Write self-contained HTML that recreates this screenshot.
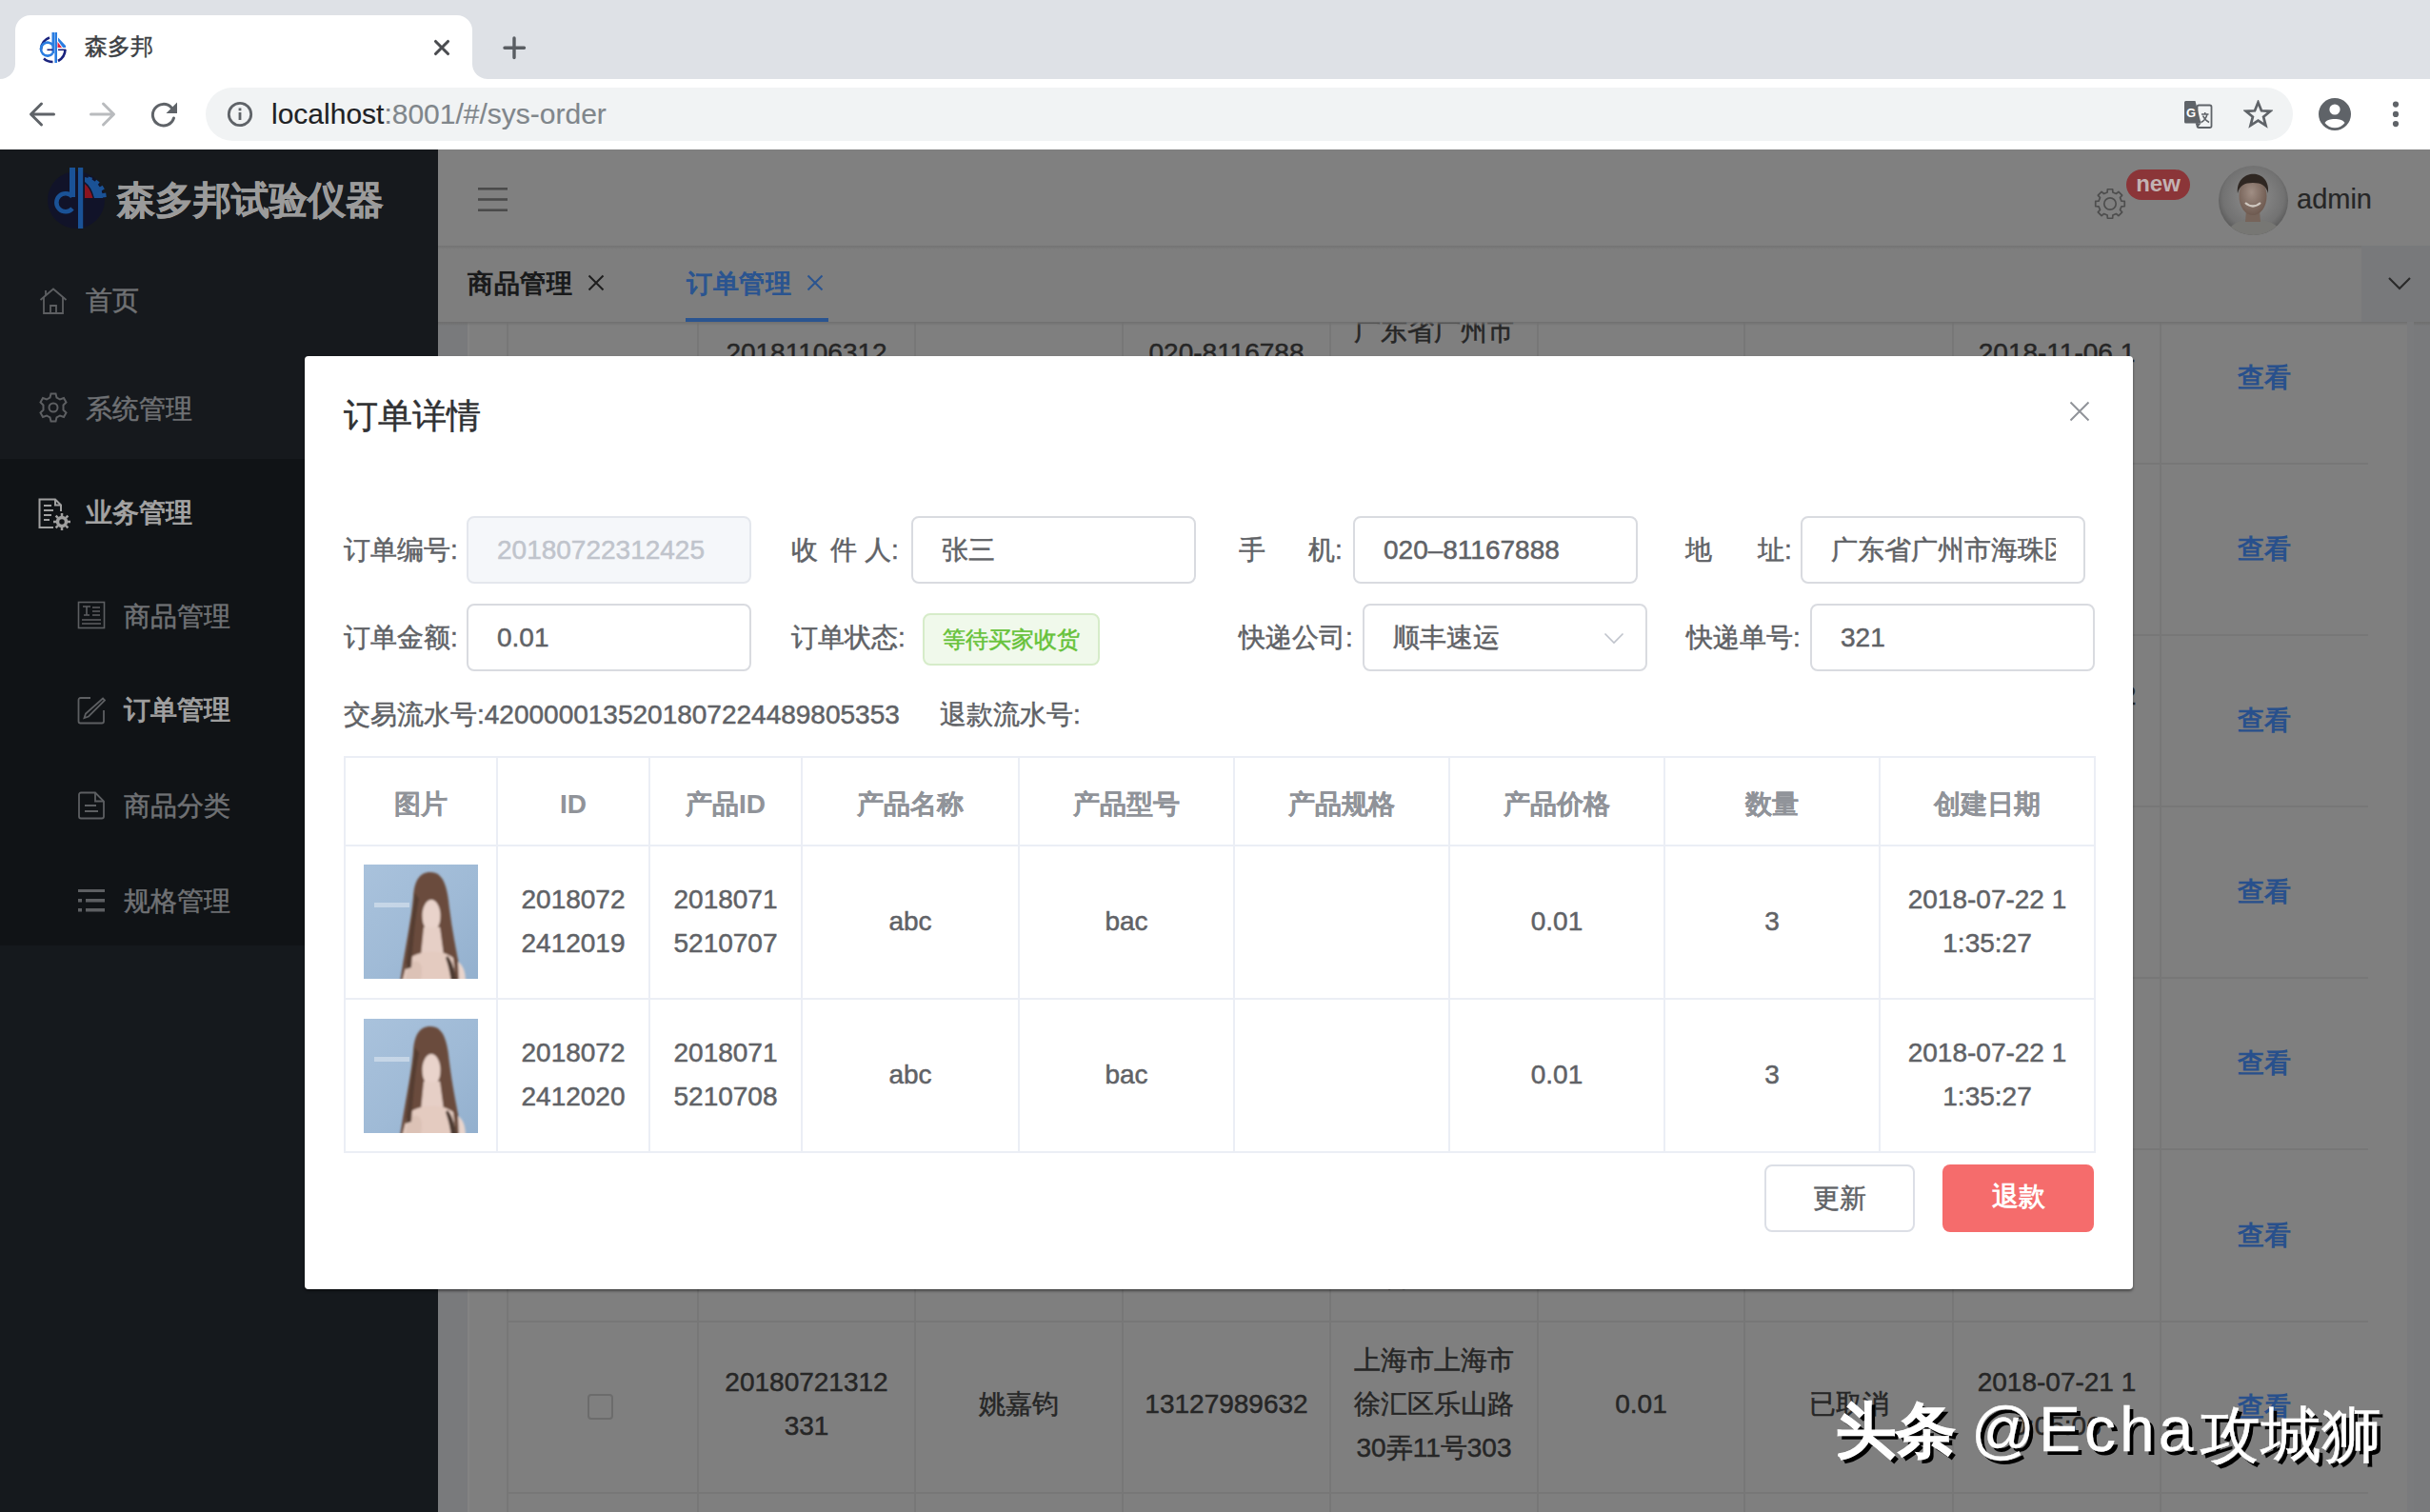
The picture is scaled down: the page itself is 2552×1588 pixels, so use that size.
<!DOCTYPE html>
<html><head><meta charset="utf-8">
<style>
*{box-sizing:border-box;margin:0;padding:0}
html,body{width:2552px;height:1588px;overflow:hidden;background:#808080;font-family:"Liberation Sans",sans-serif}
body{-webkit-text-stroke:0.5px currentColor}
.a{position:absolute}
.c{position:absolute;text-align:center;white-space:nowrap}
/* chrome */
#topstrip{left:0;top:0;width:2552px;height:84px;background:#dee1e6}
#tab{left:16px;top:16px;width:480px;height:68px;background:#fff;border-radius:16px 16px 0 0}
#toolbar{left:0;top:83px;width:2552px;height:75px;background:#fff}
#omni{left:216px;top:92px;width:2192px;height:56px;background:#f1f3f4;border-radius:28px}
/* app */
#side1{left:0;top:157px;width:460px;height:325px;background:#16191d}
#side2{left:0;top:482px;width:460px;height:511px;background:#101316}
#side3{left:0;top:993px;width:460px;height:595px;background:#15191d}
#header{left:460px;top:157px;width:2092px;height:101px;background:#808080}
#tabsbar{left:460px;top:258px;width:2092px;height:80px;background:#7e7e7e}
#content{left:460px;top:338px;width:2092px;height:1250px;background:#797a7c}
.menu{color:#6f7174;font-size:28px;line-height:28px}
/* modal */
#modal{left:320px;top:374px;width:1920px;height:980px;background:#fff;border-radius:4px;box-shadow:0 2px 3px rgba(0,0,0,.45)}
.lbl{position:absolute;color:#606266;font-size:28px;line-height:28px;white-space:nowrap}
.inp{position:absolute;border:2px solid #d9dbe0;border-radius:8px;background:#fff;height:71px;width:299px;color:#606266;font-size:28px;line-height:67px;padding-left:30px;white-space:nowrap;overflow:hidden}
table.dt{position:absolute;border-collapse:collapse;left:41px;top:420px}
.dt td,.dt th{border:2px solid #ebeef5;text-align:center;color:#606266;font-size:28px;line-height:46px}
.dt th{color:#909399;font-weight:bold;height:93px;padding-top:6px;-webkit-text-stroke:0.1px #909399}
.dt td{height:161px;padding-bottom:2px}
.btn{position:absolute;border-radius:8px;font-size:28px;text-align:center;line-height:67px}
</style></head><body>
<div id="topstrip" class="a"></div>
<div id="tab" class="a"></div>
<div class="a" style="left:0;top:67px;width:16px;height:17px;background:#fff"></div>
<div class="a" style="left:-16px;top:51px;width:32px;height:32px;background:#dee1e6;border-radius:16px"></div>
<div class="a" style="left:496px;top:67px;width:16px;height:17px;background:#fff"></div>
<div class="a" style="left:496px;top:51px;width:32px;height:32px;background:#dee1e6;border-radius:16px"></div>
<div class="a" style="left:89px;top:33px;font-size:24px;color:#3c4043">森多邦</div>
<div id="toolbar" class="a"></div>
<div id="omni" class="a"></div>
<div class="a" style="left:285px;top:103px;font-size:30px;color:#202124;white-space:nowrap;-webkit-text-stroke:0.15px">localhost<span style="color:#80868b">:8001/#/sys-order</span></div>
<!-- favicon -->
<svg class="a" style="left:40px;top:30px" width="40" height="40" viewBox="0 0 40 40">
  <path d="M12 9.5 A14 14 0 0 0 3 22" stroke="#1a237e" stroke-width="2.6" fill="none"/>
  <path d="M6 31.5 A14 14 0 0 0 15.5 35" stroke="#1a237e" stroke-width="2.6" fill="none"/>
  <path d="M21 34 A14 14 0 0 0 28.5 22" stroke="#1a237e" stroke-width="2.6" fill="none"/>
  <rect x="14.5" y="4" width="2.6" height="22" fill="#2a7de1"/>
  <rect x="17.4" y="4" width="2.6" height="32" fill="#2a7de1"/>
  <path d="M16 18 A7 7 0 1 0 15.5 26" stroke="#2a7de1" stroke-width="2.6" fill="none"/>
  <rect x="9.5" y="21.5" width="6" height="1.6" fill="#1a237e"/>
  <rect x="21" y="21.5" width="8" height="1.6" fill="#1a237e"/>
  <path d="M20.5 14 L20.5 20 L25 20 Z" fill="#e8203a"/>
  <path d="M21 9.5 L29 18 L29 20 L26 20 L21 13 Z" fill="#2a7de1"/>
</svg>
<!-- tab close -->
<svg class="a" style="left:454px;top:40px" width="20" height="20" viewBox="0 0 20 20"><path d="M3.5 3.5L16.5 16.5M16.5 3.5L3.5 16.5" stroke="#4a4c50" stroke-width="3.1" stroke-linecap="round"/></svg>
<!-- new tab -->
<svg class="a" style="left:527px;top:37px" width="27" height="27" viewBox="0 0 27 27"><path d="M13 3V23.5M3 13.3H23.5" stroke="#5a5e63" stroke-width="3.4" stroke-linecap="round"/></svg>
<!-- back / fwd / reload -->
<svg class="a" style="left:28px;top:104px" width="32" height="32" viewBox="0 0 32 32"><path d="M28.5 16H6M15.5 5L4.5 16L15.5 27" stroke="#5f6368" stroke-width="3" fill="none" stroke-linecap="round" stroke-linejoin="round"/></svg>
<svg class="a" style="left:92px;top:104px" width="32" height="32" viewBox="0 0 32 32"><path d="M3.5 16H26M16.5 5L27.5 16L16.5 27" stroke="#b9bbbe" stroke-width="3" fill="none" stroke-linecap="round" stroke-linejoin="round"/></svg>
<svg class="a" style="left:156px;top:104px" width="34" height="34" viewBox="0 0 34 34"><path d="M26.5 20 A11.3 11.3 0 1 1 24 9" stroke="#5f6368" stroke-width="3" fill="none" stroke-linecap="round"/><path d="M30 3.5V15H18.5Z" fill="#5f6368"/></svg>
<!-- info -->
<svg class="a" style="left:237px;top:105px" width="30" height="30" viewBox="0 0 30 30"><circle cx="15" cy="15" r="11.7" stroke="#5f6368" stroke-width="2.8" fill="none"/><rect x="13.6" y="13" width="2.8" height="8" fill="#5f6368"/><rect x="13.6" y="8.5" width="2.8" height="2.8" fill="#5f6368"/></svg>
<!-- translate -->
<svg class="a" style="left:2290px;top:103px" width="36" height="34" viewBox="0 0 36 34"><rect x="17.5" y="7.5" width="15" height="23.5" rx="1.8" fill="none" stroke="#5f6368" stroke-width="1.8"/><path d="M5.5 3H15.5L21.5 26.5H5.5A1.5 1.5 0 0 1 4 25V4.5A1.5 1.5 0 0 1 5.5 3Z" fill="#5f6368"/><path d="M15.5 26.5L18 31L21.5 26.5Z" fill="#5f6368"/><text x="6" y="19.5" font-family="Liberation Sans" font-weight="bold" font-size="13" fill="#fff" style="-webkit-text-stroke:0">G</text><path d="M22 17H29.5M25.7 15V17M28 17C27 21 24.5 24 21.5 25.5M23.5 18.5C25 22 27 24 30 25.5" stroke="#5f6368" stroke-width="1.5" fill="none"/></svg>
<!-- star -->
<svg class="a" style="left:2356px;top:105px" width="31" height="30" viewBox="0 0 31 30"><path d="M15.5 2.5L19 11.3L28.3 11.8L21.1 17.7L23.5 26.8L15.5 21.7L7.5 26.8L9.9 17.7L2.7 11.8L12 11.3Z" stroke="#5f6368" stroke-width="2.7" fill="none" stroke-linejoin="miter"/></svg>
<!-- account -->
<svg class="a" style="left:2434px;top:102px" width="36" height="36" viewBox="0 0 36 36"><circle cx="18" cy="18" r="17" fill="#5f6368"/><circle cx="18" cy="13" r="5.6" fill="#fff"/><path d="M7.5 27 C10 21.5 26 21.5 28.5 27 A13 13 0 0 1 7.5 27Z" fill="#fff"/></svg>
<!-- menu dots -->
<svg class="a" style="left:2510px;top:104px" width="12" height="32" viewBox="0 0 12 32"><circle cx="6" cy="5.6" r="3.1" fill="#5f6368"/><circle cx="6" cy="15.9" r="3.1" fill="#5f6368"/><circle cx="6" cy="26.1" r="3.1" fill="#5f6368"/></svg>

<div id="side1" class="a"></div>
<div id="side2" class="a"></div>
<div id="side3" class="a"></div>
<div class="a" style="left:123px;top:183px;font-size:40px;font-weight:bold;color:#9b9b9b;white-space:nowrap">森多邦试验仪器</div>
<!-- sidebar logo -->
<svg class="a" style="left:45px;top:170px" width="70" height="75" viewBox="0 0 70 75">
  <circle cx="35" cy="40" r="30" fill="#10122e" opacity="0.75"/>
  <rect x="37" y="6" width="5.2" height="64" fill="#1a5296"/>
  <rect x="28" y="6" width="6" height="31" fill="#1a5296"/>
  <path d="M31 36.5 A9.5 9.5 0 1 0 31 49" stroke="#1a5296" stroke-width="4.6" fill="none"/>
  <path d="M44 23 Q50 28 52.5 38 L44 38 Z" fill="#8a1420"/>
  <path d="M44 16 A22 22 0 0 1 63 38 L54 38 Q51 26 44 21 Z" fill="#1a5296"/>
  <rect x="47.1" y="16.0" width="4.4" height="4.4" transform="rotate(-75 49.3 18.2)" fill="#1a5296"/><rect x="54.4" y="19.6" width="4.4" height="4.4" transform="rotate(-52 56.6 21.8)" fill="#1a5296"/><rect x="59.6" y="25.6" width="4.4" height="4.4" transform="rotate(-30 61.8 27.8)" fill="#1a5296"/><rect x="62.1" y="32.9" width="4.4" height="4.4" transform="rotate(-8 64.3 35.1)" fill="#1a5296"/>
</svg>
<!-- sidebar icons -->
<svg class="a" style="left:40px;top:300px" width="32" height="32" viewBox="0 0 32 32" fill="none" stroke="#5d5f62" stroke-width="1.8"><path d="M2.5 15L16 3.5L29.5 15"/><path d="M6 12V29H26V12"/><path d="M13 29V21H19V29"/><path d="M8 5V10"/></svg>
<svg class="a" style="left:39px;top:411px" width="34" height="34" viewBox="0 0 34 34" fill="none" stroke="#5d5f62" stroke-width="2"><path d="M14.5 2.5H19.5L20.5 6.5L24 8.5L28 7L30.5 11.5L27.5 14.5V19.5L30.5 22.5L28 27L24 25.5L20.5 27.5L19.5 31.5H14.5L13.5 27.5L10 25.5L6 27L3.5 22.5L6.5 19.5V14.5L3.5 11.5L6 7L10 8.5L13.5 6.5Z"/><circle cx="17" cy="17" r="4.5"/></svg>
<svg class="a" style="left:39px;top:522px" width="36" height="36" viewBox="0 0 36 36" fill="none" stroke="#a0a0a0" stroke-width="2"><path d="M17 32H2.5V2.5H19L25 8.5V15"/><path d="M19 2.5V8.5H25"/><path d="M7 9H15M7 14H17M7 19H15M7 24H13"/><circle cx="26" cy="26" r="4.5" stroke-width="3.5"/><path d="M26 17V20M26 32V35M17 26H20M32 26H35M19.6 19.6L21.8 21.8M30.2 30.2L32.4 32.4M19.6 32.4L21.8 30.2M30.2 21.8L32.4 19.6" stroke-width="2.5"/></svg>
<svg class="a" style="left:81px;top:631px" width="30" height="30" viewBox="0 0 30 30" fill="none" stroke="#5d5f62" stroke-width="1.6"><rect x="1.5" y="1.5" width="27" height="27"/><path d="M6 6H14M10 6V15M7 15H13M16 7H24M16 11H24M16 15H24M5 20H25M5 24H25"/></svg>
<svg class="a" style="left:81px;top:731px" width="30" height="30" viewBox="0 0 30 30" fill="none" stroke="#5d5f62" stroke-width="1.8"><path d="M14 2H3.5A2 2 0 0 0 1.5 4V26.5A2 2 0 0 0 3.5 28.5H26A2 2 0 0 0 28 26.5V15"/><path d="M27 2.5L29 4.5L12 21.5L7.5 23L9 18.5Z"/></svg>
<svg class="a" style="left:81px;top:831px" width="30" height="30" viewBox="0 0 30 30" fill="none" stroke="#5d5f62" stroke-width="1.8"><path d="M19 1.5H4A2 2 0 0 0 2 3.5V26.5A2 2 0 0 0 4 28.5H26A2 2 0 0 0 28 26.5V10.5Z"/><path d="M19 1.5V10.5H28"/><path d="M8 15H20M8 21H22"/></svg>
<svg class="a" style="left:81px;top:933px" width="30" height="26" viewBox="0 0 30 26" fill="#5d5f62"><rect x="1" y="1" width="28" height="3"/><rect x="1" y="11" width="4" height="3.5"/><rect x="9" y="11" width="20" height="3.5"/><rect x="1" y="21" width="4" height="3.5"/><rect x="9" y="21" width="20" height="3.5"/></svg>
<div class="a menu" style="left:90px;top:302px">首页</div>
<div class="a menu" style="left:90px;top:416px">系统管理</div>
<div class="a menu" style="left:90px;top:525px;color:#a3a3a3;-webkit-text-stroke:1px #a3a3a3">业务管理</div>
<div class="a menu" style="left:130px;top:634px">商品管理</div>
<div class="a menu" style="left:130px;top:732px;color:#a0a0a0;-webkit-text-stroke:1px #a0a0a0">订单管理</div>
<div class="a menu" style="left:130px;top:833px">商品分类</div>
<div class="a menu" style="left:130px;top:933px">规格管理</div>

<div id="header" class="a"></div>
<div id="tabsbar" class="a"></div>
<div id="content" class="a"></div>
<div class="a" style="left:460px;top:258px;width:2092px;height:4px;background:linear-gradient(#737373,#7e7e7e)"></div>
<div class="a" style="left:2480px;top:258px;width:72px;height:80px;background:#78797b"></div>
<div class="a" style="left:460px;top:338px;width:2092px;height:4px;background:linear-gradient(#727272,#7a7a7a00)"></div>
<!-- hamburger -->
<svg class="a" style="left:502px;top:196px" width="32" height="27" viewBox="0 0 32 27" fill="#4a4a4a"><rect x="0" y="1" width="31" height="2.6"/><rect x="0" y="12.2" width="31" height="2.6"/><rect x="0" y="23.4" width="31" height="2.6"/></svg>
<!-- gear + badge -->
<svg class="a" style="left:2199px;top:197px" width="34" height="34" viewBox="0 0 34 34" fill="none" stroke="#4e4e4e" stroke-width="1.7" stroke-linejoin="round"><path d="M28.96 14.13 L32.27 14.34 L32.27 19.66 L28.96 19.87 L27.49 23.43 L29.68 25.91 L25.91 29.68 L23.43 27.49 L19.87 28.96 L19.66 32.27 L14.34 32.27 L14.13 28.96 L10.57 27.49 L8.09 29.68 L4.32 25.91 L6.51 23.43 L5.04 19.87 L1.73 19.66 L1.73 14.34 L5.04 14.13 L6.51 10.57 L4.32 8.09 L8.09 4.32 L10.57 6.51 L14.13 5.04 L14.34 1.73 L19.66 1.73 L19.87 5.04 L23.43 6.51 L25.91 4.32 L29.68 8.09 L27.49 10.57Z"/><circle cx="17" cy="17" r="6.2"/></svg>
<div class="a" style="left:2233px;top:178px;width:67px;height:32px;border-radius:16px;background:#8b3538;color:#c2b2b2;font-weight:bold;font-size:24px;line-height:30px;text-align:center;-webkit-text-stroke:0">new</div>
<!-- avatar -->
<svg class="a" style="left:2329px;top:173px" width="75" height="75" viewBox="0 0 75 75">
  <defs><radialGradient id="avg" cx="0.5" cy="0.45" r="0.55"><stop offset="0" stop-color="#8e8e8e"/><stop offset="0.8" stop-color="#727272"/><stop offset="1" stop-color="#5a5a5a"/></radialGradient>
  <radialGradient id="skin" cx="0.45" cy="0.4" r="0.6"><stop offset="0" stop-color="#a08e84"/><stop offset="1" stop-color="#6e5a50"/></radialGradient>
  <clipPath id="avc"><circle cx="37.5" cy="37.5" r="36.5"/></clipPath></defs>
  <circle cx="37.5" cy="37.5" r="36.5" fill="url(#avg)"/>
  <g clip-path="url(#avc)">
    <path d="M8 75 C12 62 24 57 37 57 C52 57 64 62 70 75Z" fill="#777774"/>
    <path d="M30 48 L44 48 L45 60 L29 60Z" fill="#76645a"/>
    <ellipse cx="37" cy="33" rx="14.5" ry="20" fill="url(#skin)"/>
    <path d="M21 30 C18 4 56 2 53 30 C51 22 46 19 37 19 C28 19 23 22 21 30Z" fill="#2f2722"/>
    <path d="M29 40 Q37 47 45 40" stroke="#cfc8c0" stroke-width="2.2" fill="none"/>
  </g>
</svg>
<div class="a" style="left:2412px;top:193px;font-size:29px;color:#262626;-webkit-text-stroke:0.2px #262626">admin</div>
<!-- tabs -->
<div class="a" style="left:491px;top:282px;font-size:27px;line-height:32px;letter-spacing:0.6px;color:#18191a;-webkit-text-stroke:1.1px #18191a">商品管理</div>
<svg class="a" style="left:617px;top:288px" width="18" height="18" viewBox="0 0 18 18"><path d="M1.5 1.5L16.5 16.5M16.5 1.5L1.5 16.5" stroke="#1e1e1e" stroke-width="2"/></svg>
<div class="a" style="left:721px;top:282px;font-size:27px;line-height:32px;letter-spacing:0.6px;color:#2a5490;-webkit-text-stroke:1.1px #2a5490">订单管理</div>
<svg class="a" style="left:847px;top:288px" width="18" height="18" viewBox="0 0 18 18"><path d="M1.5 1.5L16.5 16.5M16.5 1.5L1.5 16.5" stroke="#2a5490" stroke-width="2"/></svg>
<div class="a" style="left:720px;top:334px;width:150px;height:4px;background:#2a5490"></div>
<svg class="a" style="left:2507px;top:290px" width="26" height="16" viewBox="0 0 26 16"><path d="M2 2L13 13L24 2" stroke="#2a2a2a" stroke-width="2.2" fill="none"/></svg>
<!-- background table -->
<div id="bgt" class="a" style="left:491px;top:338px;width:1996px;height:1250px;background:#7f7f7f;overflow:hidden">
<div class="a" style="left:41px;top:0;width:2px;height:1250px;background:#777"></div>
<div class="a" style="left:241px;top:0;width:2px;height:1250px;background:#777"></div>
<div class="a" style="left:469px;top:0;width:2px;height:1250px;background:#777"></div>
<div class="a" style="left:687px;top:0;width:2px;height:1250px;background:#777"></div>
<div class="a" style="left:905px;top:0;width:2px;height:1250px;background:#777"></div>
<div class="a" style="left:1123px;top:0;width:2px;height:1250px;background:#777"></div>
<div class="a" style="left:1340px;top:0;width:2px;height:1250px;background:#777"></div>
<div class="a" style="left:1559px;top:0;width:2px;height:1250px;background:#777"></div>
<div class="a" style="left:1777px;top:0;width:2px;height:1250px;background:#777"></div>
<div class="a" style="left:42px;top:148px;width:1954px;height:2px;background:#777"></div>
<div class="a" style="left:42px;top:328px;width:1954px;height:2px;background:#777"></div>
<div class="a" style="left:42px;top:508px;width:1954px;height:2px;background:#777"></div>
<div class="a" style="left:42px;top:688px;width:1954px;height:2px;background:#777"></div>
<div class="a" style="left:42px;top:868px;width:1954px;height:2px;background:#777"></div>
<div class="a" style="left:42px;top:1049px;width:1954px;height:2px;background:#777"></div>
<div class="a" style="left:42px;top:1229px;width:1954px;height:2px;background:#777"></div>
<div class="a" style="left:126px;top:45px;width:27px;height:27px;border:2px solid #6c6c6c;border-radius:4px"></div>
<div class="c" style="left:242px;width:228px;top:10px;font-size:28px;line-height:46px;color:#262626">20181106312<br>426</div>
<div class="c" style="left:470px;width:218px;top:33px;font-size:28px;line-height:46px;color:#262626">张三</div>
<div class="c" style="left:688px;width:218px;top:10px;font-size:28px;line-height:46px;color:#262626">020-8116788<br>8</div>
<div class="c" style="left:906px;width:218px;top:-13px;font-size:28px;line-height:46px;color:#262626">广东省广州市<br>海珠区新港中<br>路397号</div>
<div class="c" style="left:1124px;width:217px;top:33px;font-size:28px;line-height:46px;color:#262626">0.01</div>
<div class="c" style="left:1341px;width:219px;top:33px;font-size:28px;line-height:46px;color:#262626">等待买家收货</div>
<div class="c" style="left:1560px;width:218px;top:10px;font-size:28px;line-height:46px;color:#262626">2018-11-06 1<br>1:35:27</div>
<div class="c" style="left:1778px;width:218px;top:36px;font-size:28px;line-height:46px;color:#28508c;font-weight:bold;-webkit-text-stroke:0">查看</div>
<div class="a" style="left:126px;top:225px;width:27px;height:27px;border:2px solid #6c6c6c;border-radius:4px"></div>
<div class="c" style="left:242px;width:228px;top:190px;font-size:28px;line-height:46px;color:#262626">20180722312<br>425</div>
<div class="c" style="left:470px;width:218px;top:213px;font-size:28px;line-height:46px;color:#262626">张三</div>
<div class="c" style="left:688px;width:218px;top:190px;font-size:28px;line-height:46px;color:#262626">020-8116788<br>8</div>
<div class="c" style="left:906px;width:218px;top:167px;font-size:28px;line-height:46px;color:#262626">广东省广州市<br>海珠区新港中<br>路397号</div>
<div class="c" style="left:1124px;width:217px;top:213px;font-size:28px;line-height:46px;color:#262626">0.01</div>
<div class="c" style="left:1341px;width:219px;top:213px;font-size:28px;line-height:46px;color:#262626">等待买家收货</div>
<div class="c" style="left:1560px;width:218px;top:190px;font-size:28px;line-height:46px;color:#262626">2018-07-22<br>11:35:27</div>
<div class="c" style="left:1778px;width:218px;top:216px;font-size:28px;line-height:46px;color:#28508c;font-weight:bold;-webkit-text-stroke:0">查看</div>
<div class="a" style="left:126px;top:405px;width:27px;height:27px;border:2px solid #6c6c6c;border-radius:4px"></div>
<div class="c" style="left:242px;width:228px;top:370px;font-size:28px;line-height:46px;color:#262626">20180722312<br>424</div>
<div class="c" style="left:470px;width:218px;top:393px;font-size:28px;line-height:46px;color:#262626">张三</div>
<div class="c" style="left:688px;width:218px;top:370px;font-size:28px;line-height:46px;color:#262626">020-8116788<br>8</div>
<div class="c" style="left:906px;width:218px;top:347px;font-size:28px;line-height:46px;color:#262626">广东省广州市<br>海珠区新港中<br>路397号</div>
<div class="c" style="left:1124px;width:217px;top:393px;font-size:28px;line-height:46px;color:#262626">0.01</div>
<div class="c" style="left:1341px;width:219px;top:393px;font-size:28px;line-height:46px;color:#262626">已取消</div>
<div class="c" style="left:1560px;width:218px;top:370px;font-size:28px;line-height:46px;color:#262626">2018-07-22 2<br>0:15:11</div>
<div class="c" style="left:1778px;width:218px;top:396px;font-size:28px;line-height:46px;color:#28508c;font-weight:bold;-webkit-text-stroke:0">查看</div>
<div class="a" style="left:126px;top:585px;width:27px;height:27px;border:2px solid #6c6c6c;border-radius:4px"></div>
<div class="c" style="left:242px;width:228px;top:550px;font-size:28px;line-height:46px;color:#262626">20180722312<br>423</div>
<div class="c" style="left:470px;width:218px;top:573px;font-size:28px;line-height:46px;color:#262626">张三</div>
<div class="c" style="left:688px;width:218px;top:550px;font-size:28px;line-height:46px;color:#262626">020-8116788<br>8</div>
<div class="c" style="left:906px;width:218px;top:527px;font-size:28px;line-height:46px;color:#262626">广东省广州市<br>海珠区新港中<br>路397号</div>
<div class="c" style="left:1124px;width:217px;top:573px;font-size:28px;line-height:46px;color:#262626">0.01</div>
<div class="c" style="left:1341px;width:219px;top:573px;font-size:28px;line-height:46px;color:#262626">已取消</div>
<div class="c" style="left:1560px;width:218px;top:550px;font-size:28px;line-height:46px;color:#262626">2018-07-22<br>11:35:27</div>
<div class="c" style="left:1778px;width:218px;top:576px;font-size:28px;line-height:46px;color:#28508c;font-weight:bold;-webkit-text-stroke:0">查看</div>
<div class="a" style="left:126px;top:765px;width:27px;height:27px;border:2px solid #6c6c6c;border-radius:4px"></div>
<div class="c" style="left:242px;width:228px;top:730px;font-size:28px;line-height:46px;color:#262626">20180722312<br>422</div>
<div class="c" style="left:470px;width:218px;top:753px;font-size:28px;line-height:46px;color:#262626">张三</div>
<div class="c" style="left:688px;width:218px;top:730px;font-size:28px;line-height:46px;color:#262626">020-8116788<br>8</div>
<div class="c" style="left:906px;width:218px;top:707px;font-size:28px;line-height:46px;color:#262626">广东省广州市<br>海珠区新港中<br>路397号</div>
<div class="c" style="left:1124px;width:217px;top:753px;font-size:28px;line-height:46px;color:#262626">0.01</div>
<div class="c" style="left:1341px;width:219px;top:753px;font-size:28px;line-height:46px;color:#262626">已取消</div>
<div class="c" style="left:1560px;width:218px;top:730px;font-size:28px;line-height:46px;color:#262626">2018-07-22<br>11:35:27</div>
<div class="c" style="left:1778px;width:218px;top:756px;font-size:28px;line-height:46px;color:#28508c;font-weight:bold;-webkit-text-stroke:0">查看</div>
<div class="a" style="left:126px;top:946px;width:27px;height:27px;border:2px solid #6c6c6c;border-radius:4px"></div>
<div class="c" style="left:242px;width:228px;top:910px;font-size:28px;line-height:46px;color:#262626">20180721312<br>332</div>
<div class="c" style="left:470px;width:218px;top:934px;font-size:28px;line-height:46px;color:#262626">姚嘉钧</div>
<div class="c" style="left:688px;width:218px;top:934px;font-size:28px;line-height:46px;color:#262626">13127989632</div>
<div class="c" style="left:906px;width:218px;top:888px;font-size:28px;line-height:46px;color:#262626">上海市上海市<br>徐汇区乐山路<br>30弄11号303</div>
<div class="c" style="left:1124px;width:217px;top:934px;font-size:28px;line-height:46px;color:#262626">0.01</div>
<div class="c" style="left:1341px;width:219px;top:934px;font-size:28px;line-height:46px;color:#262626">已取消</div>
<div class="c" style="left:1560px;width:218px;top:910px;font-size:28px;line-height:46px;color:#262626">2018-07-21<br>10:05:06</div>
<div class="c" style="left:1778px;width:218px;top:937px;font-size:28px;line-height:46px;color:#28508c;font-weight:bold;-webkit-text-stroke:0">查看</div>
<div class="a" style="left:126px;top:1126px;width:27px;height:27px;border:2px solid #6c6c6c;border-radius:4px"></div>
<div class="c" style="left:242px;width:228px;top:1091px;font-size:28px;line-height:46px;color:#262626">20180721312<br>331</div>
<div class="c" style="left:470px;width:218px;top:1114px;font-size:28px;line-height:46px;color:#262626">姚嘉钧</div>
<div class="c" style="left:688px;width:218px;top:1114px;font-size:28px;line-height:46px;color:#262626">13127989632</div>
<div class="c" style="left:906px;width:218px;top:1068px;font-size:28px;line-height:46px;color:#262626">上海市上海市<br>徐汇区乐山路<br>30弄11号303</div>
<div class="c" style="left:1124px;width:217px;top:1114px;font-size:28px;line-height:46px;color:#262626">0.01</div>
<div class="c" style="left:1341px;width:219px;top:1114px;font-size:28px;line-height:46px;color:#262626">已取消</div>
<div class="c" style="left:1560px;width:218px;top:1091px;font-size:28px;line-height:46px;color:#262626">2018-07-21 1<br>0:05:06</div>
<div class="c" style="left:1778px;width:218px;top:1117px;font-size:28px;line-height:46px;color:#28508c;font-weight:bold;-webkit-text-stroke:0">查看</div>
<div class="a" style="left:126px;top:1306px;width:27px;height:27px;border:2px solid #6c6c6c;border-radius:4px"></div>
<div class="c" style="left:242px;width:228px;top:1271px;font-size:28px;line-height:46px;color:#262626">20180721312<br>330</div>
<div class="c" style="left:470px;width:218px;top:1294px;font-size:28px;line-height:46px;color:#262626">姚嘉钧</div>
<div class="c" style="left:688px;width:218px;top:1294px;font-size:28px;line-height:46px;color:#262626">13127989632</div>
<div class="c" style="left:906px;width:218px;top:1248px;font-size:28px;line-height:46px;color:#262626">上海市上海市<br>徐汇区乐山路<br>30弄11号303</div>
<div class="c" style="left:1124px;width:217px;top:1294px;font-size:28px;line-height:46px;color:#262626">0.01</div>
<div class="c" style="left:1341px;width:219px;top:1294px;font-size:28px;line-height:46px;color:#262626">已取消</div>
<div class="c" style="left:1560px;width:218px;top:1271px;font-size:28px;line-height:46px;color:#262626">2018-07-21 1<br>0:05:06</div>
<div class="c" style="left:1778px;width:218px;top:1297px;font-size:28px;line-height:46px;color:#28508c;font-weight:bold;-webkit-text-stroke:0">查看</div>
</div>
<div class="a" style="left:2487px;top:338px;width:41px;height:1250px;background:#7f7f7f"></div>
<div class="a" style="left:491px;top:338px;width:2px;height:1250px;background:#838383"></div>
<div class="a" style="left:460px;top:338px;width:2092px;height:4px;background:linear-gradient(#6f6f6f,rgba(120,120,120,0))"></div>
<div class="a" style="left:2528px;top:338px;width:7px;height:1250px;background:#7a7b7d"></div>

<div id="modal" class="a">
  <div class="a" style="left:41px;top:45px;font-size:36px;color:#303133;line-height:36px">订单详情</div>
  <div class="lbl" style="left:41px;top:190px">订单编号:</div>
  <div class="inp" style="left:170px;top:168px;background:#f5f7fa;border-color:#e4e7ed;color:#c0c4cc">20180722312425</div>
  <div class="lbl" style="left:511px;top:190px">收</div><div class="lbl" style="left:552px;top:190px">件</div><div class="lbl" style="left:588px;top:190px">人:</div>
  <div class="inp" style="left:637px;top:168px">张三</div>
  <div class="lbl" style="left:981px;top:190px">手</div><div class="lbl" style="left:1054px;top:190px">机:</div>
  <div class="inp" style="left:1101px;top:168px">020–81167888</div>
  <div class="lbl" style="left:1450px;top:190px">地</div><div class="lbl" style="left:1526px;top:190px">址:</div>
  <div class="inp" style="left:1571px;top:168px;padding-left:0"><div style="position:absolute;left:30px;top:0;width:236px;overflow:hidden">广东省广州市海珠区</div></div>

  <div class="lbl" style="left:41px;top:282px">订单金额:</div>
  <div class="inp" style="left:170px;top:260px">0.01</div>
  <div class="lbl" style="left:511px;top:282px">订单状态:</div>
  <div class="a" style="left:649px;top:270px;width:186px;height:55px;background:#f0f9eb;border:2px solid #d6ecc9;border-radius:8px;color:#67c23a;font-size:24px;line-height:51px;text-align:center">等待买家收货</div>
  <div class="lbl" style="left:981px;top:282px">快递公司:</div>
  <div class="inp" style="left:1111px;top:260px">顺丰速运</div>
  <svg class="a" style="left:1364px;top:290px" width="22" height="15" viewBox="0 0 22 15"><path d="M1.5 1.5L11 11L20.5 1.5" stroke="#c0c4cc" stroke-width="1.6" fill="none"/></svg>
  <div class="lbl" style="left:1451px;top:282px">快递单号:</div>
  <div class="inp" style="left:1581px;top:260px">321</div>

  <div class="lbl" style="left:41px;top:363px">交易流水号:4200000135201807224489805353</div>
  <div class="lbl" style="left:667px;top:363px">退款流水号:</div>

  <table class="dt">
    <tr><th style="width:160px">图片</th><th style="width:160px">ID</th><th style="width:160px">产品ID</th><th style="width:228px">产品名称</th><th style="width:226px">产品型号</th><th style="width:226px">产品规格</th><th style="width:226px">产品价格</th><th style="width:226px">数量</th><th style="width:226px">创建日期</th></tr>
    <tr><td></td><td>2018072<br>2412019</td><td>2018071<br>5210707</td><td>abc</td><td>bac</td><td></td><td>0.01</td><td>3</td><td>2018-07-22 1<br>1:35:27</td></tr>
    <tr><td></td><td>2018072<br>2412020</td><td>2018071<br>5210708</td><td>abc</td><td>bac</td><td></td><td>0.01</td><td>3</td><td>2018-07-22 1<br>1:35:27</td></tr>
  </table>

<svg class="a" style="left:62px;top:534px" width="120" height="120" viewBox="0 0 120 120">
<defs><linearGradient id="pg1" x1="0" y1="0" x2="1" y2="1"><stop offset="0" stop-color="#a9c2dc"/><stop offset="0.55" stop-color="#9fbad6"/><stop offset="1" stop-color="#93b0ce"/></linearGradient>
<filter id="bl1" x="-5%" y="-5%" width="110%" height="110%"><feGaussianBlur stdDeviation="1.2"/></filter><clipPath id="cp1"><rect width="120" height="120"/></clipPath></defs>
<rect width="120" height="120" fill="url(#pg1)"/>
<g clip-path="url(#cp1)"><g filter="url(#bl1)">
<path d="M70 8 C58 8 53 18 52 34 C50 58 44 84 38 124 L104 124 C98 96 93 70 90 46 C88 24 84 8 70 8Z" fill="#6a4c3c"/>
<ellipse cx="71" cy="54" rx="9.5" ry="17" fill="#e9d3cb"/>
<path d="M63 66 L80 66 L84 96 L60 96Z" fill="#e6cfc6"/>
<path d="M46 100 C56 90 82 88 94 98 L97 124 L40 124Z" fill="#e4cbc0"/>
<path d="M44 124 C44 108 50 100 57 102 C63 106 61 116 59 124Z" fill="#dcc2b6"/>
<path d="M88 96 C92 100 96 110 98 124 L92 124 C90 110 88 104 86 98Z" fill="#4e3a30"/>
<path d="M99 102 C105 106 107 114 107 124 L100 124Z" fill="#e8d4cc"/>
<path d="M54 30 C50 60 46 90 44 110 L50 108 C52 80 54 56 58 36Z" fill="#553d30"/>
</g></g>
<rect x="11" y="40" width="37" height="5" fill="#e2eaf2" opacity="0.55"/>
</svg>
<svg class="a" style="left:62px;top:696px" width="120" height="120" viewBox="0 0 120 120">
<defs><linearGradient id="pg2" x1="0" y1="0" x2="1" y2="1"><stop offset="0" stop-color="#a9c2dc"/><stop offset="0.55" stop-color="#9fbad6"/><stop offset="1" stop-color="#93b0ce"/></linearGradient>
<filter id="bl2" x="-5%" y="-5%" width="110%" height="110%"><feGaussianBlur stdDeviation="1.2"/></filter><clipPath id="cp2"><rect width="120" height="120"/></clipPath></defs>
<rect width="120" height="120" fill="url(#pg2)"/>
<g clip-path="url(#cp2)"><g filter="url(#bl2)">
<path d="M70 8 C58 8 53 18 52 34 C50 58 44 84 38 124 L104 124 C98 96 93 70 90 46 C88 24 84 8 70 8Z" fill="#6a4c3c"/>
<ellipse cx="71" cy="54" rx="9.5" ry="17" fill="#e9d3cb"/>
<path d="M63 66 L80 66 L84 96 L60 96Z" fill="#e6cfc6"/>
<path d="M46 100 C56 90 82 88 94 98 L97 124 L40 124Z" fill="#e4cbc0"/>
<path d="M44 124 C44 108 50 100 57 102 C63 106 61 116 59 124Z" fill="#dcc2b6"/>
<path d="M88 96 C92 100 96 110 98 124 L92 124 C90 110 88 104 86 98Z" fill="#4e3a30"/>
<path d="M99 102 C105 106 107 114 107 124 L100 124Z" fill="#e8d4cc"/>
<path d="M54 30 C50 60 46 90 44 110 L50 108 C52 80 54 56 58 36Z" fill="#553d30"/>
</g></g>
<rect x="11" y="40" width="37" height="5" fill="#e2eaf2" opacity="0.55"/>
</svg>
  <div class="btn" style="left:1533px;top:849px;width:158px;height:71px;border:2px solid #dcdfe6;color:#606266">更新</div>
  <div class="btn" style="left:1720px;top:849px;width:159px;height:71px;background:#f56c6c;color:#fff;font-weight:bold;-webkit-text-stroke:0">退款</div>
  <svg class="a" style="left:1853px;top:47px" width="22" height="22" viewBox="0 0 22 22"><path d="M1.5 1.5L20.5 20.5M20.5 1.5L1.5 20.5" stroke="#909399" stroke-width="2"/></svg>
</div>
<div class="a" style="left:1928px;top:1460px;font-size:63px;line-height:84px;white-space:nowrap;color:#fff;font-weight:bold;text-shadow:4px 4px 0 #000;-webkit-text-stroke:1px #fff">头条</div>
<div class="a" style="left:2070px;top:1459px;font-size:66px;line-height:84px;letter-spacing:4px;white-space:nowrap;color:#fff;text-shadow:4px 4px 0 #000;-webkit-text-stroke:0.3px #fff">@Echa</div>
<div class="a" style="left:2310px;top:1465px;font-size:64px;line-height:84px;white-space:nowrap;color:#fff;text-shadow:4px 4px 0 #000;-webkit-text-stroke:0.5px #fff">攻城狮</div>
</body></html>
